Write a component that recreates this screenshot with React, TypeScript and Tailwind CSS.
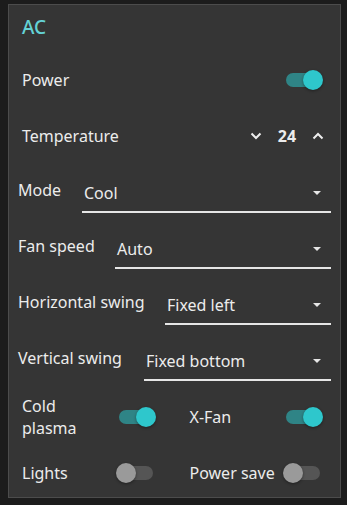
import React, { useState } from "react";

const Toggle = ({ on, onChange }: { on: boolean; onChange: () => void }) => (
  <button
    onClick={onChange}
    className="relative w-[40px] h-[20px] shrink-0 focus:outline-none"
  >
    <span
      className={`absolute left-[3px] top-[3px] w-[34px] h-[14px] rounded-full ${
        on ? "bg-[#2f8486]" : "bg-[#555555]"
      }`}
    />
    <span
      className={`absolute top-0 w-[20px] h-[20px] rounded-full shadow-[0_1px_3px_rgba(0,0,0,0.4)] ${
        on ? "left-[20px] bg-[#2ec7cc]" : "left-0 bg-[#9a9a9a]"
      }`}
    />
  </button>
);

const SelectRow = ({
  label,
  value,
  labelWidth,
}: {
  label: string;
  value: string;
  labelWidth: string;
}) => (
  <div className="flex h-[56px] pl-[9px] pr-[9px]">
    <div className={`${labelWidth} shrink-0 whitespace-nowrap mt-[19px] leading-[20px]`}>
      {label}
    </div>
    <div className="flex-1 mt-[13px] h-[39px] border-b-2 border-[#e6e6e6] flex items-center pl-[2px] pr-[10px] justify-between">
      <span className="leading-[20px]">{value}</span>
      <svg width="8" height="4" viewBox="0 0 8 4">
        <path d="M0 0 L8 0 L4 4 Z" fill="#e6e6e6" />
      </svg>
    </div>
  </div>
);

const Chevron = ({ up }: { up?: boolean }) => (
  <svg width="12" height="8" viewBox="0 0 12 8">
    <path
      d={up ? "M1.5 6.5 L6 2 L10.5 6.5" : "M1.5 1.5 L6 6 L10.5 1.5"}
      stroke="#eeeeee"
      strokeWidth="2"
      fill="none"
    />
  </svg>
);

export default function App() {
  const [power, setPower] = useState(true);
  const [plasma, setPlasma] = useState(true);
  const [xfan, setXfan] = useState(true);
  const [lights, setLights] = useState(false);
  const [saver, setSaver] = useState(false);
  const [temp, setTemp] = useState(24);

  return (
    <div
      className="w-[347px] h-[505px] bg-[#1c1c1c] pt-[4px] pl-[8px] text-[16px] text-[#ececec]"
      style={{ fontFamily: '"Noto Sans", "Open Sans", sans-serif' }}
    >
      <div className="w-[333px] h-[494px] bg-[#353535] border border-[#4c4c4c]">
        <div className="h-[44px] flex items-center pl-[13px] text-[19px] font-medium text-[#64d2d6]">
          AC
        </div>

        <div className="h-[62px] flex items-center justify-between pl-[13px] pr-[17px]">
          <span>Power</span>
          <Toggle on={power} onChange={() => setPower(!power)} />
        </div>

        <div className="h-[50px] flex items-center justify-between pl-[13px] pr-[16px]">
          <span>Temperature</span>
          <div className="flex items-center">
            <button onClick={() => setTemp(temp - 1)} className="flex">
              <Chevron />
            </button>
            <span className="font-bold w-[20px] ml-[15px] mr-[15px] text-center">{temp}</span>
            <button onClick={() => setTemp(temp + 1)} className="flex">
              <Chevron up />
            </button>
          </div>
        </div>

        <SelectRow label="Mode" value="Cool" labelWidth="w-[64px]" />
        <SelectRow label="Fan speed" value="Auto" labelWidth="w-[97px]" />
        <SelectRow label="Horizontal swing" value="Fixed left" labelWidth="w-[147px]" />
        <SelectRow label="Vertical swing" value="Fixed bottom" labelWidth="w-[126px]" />

        <div className="grid grid-cols-2 gap-x-[34px] pl-[13px] pr-[17px]">
          <div className="h-[64px] flex items-center justify-between">
            <span className="leading-[22px]">
              Cold
              <br />
              plasma
            </span>
            <Toggle on={plasma} onChange={() => setPlasma(!plasma)} />
          </div>
          <div className="h-[64px] flex items-center justify-between">
            <span>X-Fan</span>
            <Toggle on={xfan} onChange={() => setXfan(!xfan)} />
          </div>
          <div className="h-[47px] flex items-center justify-between">
            <span>Lights</span>
            <Toggle on={lights} onChange={() => setLights(!lights)} />
          </div>
          <div className="h-[47px] flex items-center justify-between">
            <span>Power save</span>
            <Toggle on={saver} onChange={() => setSaver(!saver)} />
          </div>
        </div>
      </div>
    </div>
  );
}
